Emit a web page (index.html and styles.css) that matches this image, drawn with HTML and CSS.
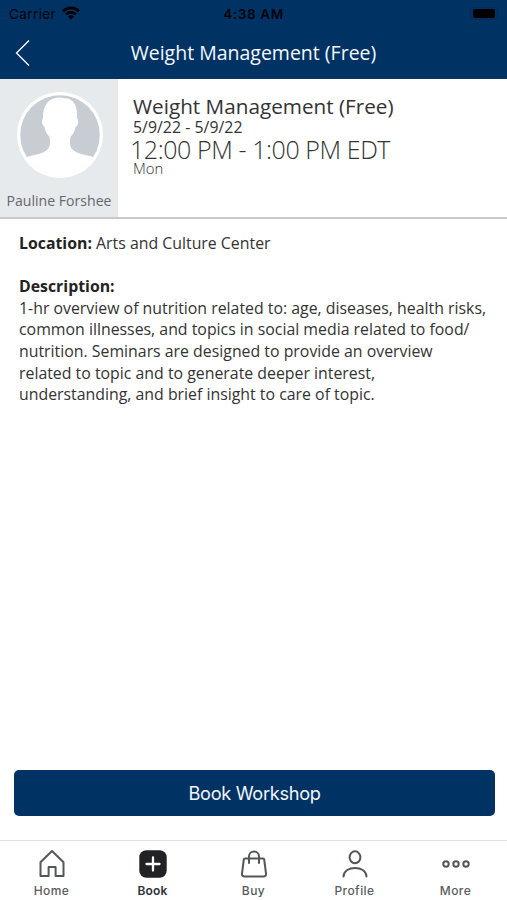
FILE: index.html
```html
<!DOCTYPE html>
<html lang="en">
<head>
<meta charset="utf-8">
<title>Weight Management (Free)</title>
<link rel="stylesheet" href="styles.css">
</head>
<body>
<header class="top">
  <div class="status">
    <span class="carrier">Carrier
      <svg width="18" height="14" viewBox="0 0 18 14" fill="none" stroke="#000" stroke-width="2.7"><path d="M1 5.2a11.5 11.5 0 0 1 16 0M4 8.4a7.2 7.2 0 0 1 10 0"/><path d="M9 13.6 6 10.8a4.3 4.3 0 0 1 6 0z" fill="#000" stroke="none"/></svg>
    </span>
    <span class="clock">4:38 AM</span>
    <span class="battery"><i></i></span>
  </div>
  <div class="nav">
    <svg class="back" width="16" height="28" viewBox="0 0 16 28" fill="none" stroke="#fff" stroke-width="1.3"><path d="M14 1.5 1.5 14 14 26.5"/></svg>
    <h1>Weight Management (Free)</h1>
  </div>
</header>
<section class="summary">
  <div class="staff">
    <svg width="86" height="86" viewBox="0 0 86 86">
      <circle cx="43" cy="43" r="43" fill="#fff"/>
      <circle cx="43" cy="43" r="39.800" fill="#c8cdd4"/>
      <path d="M9.500 65C17 62.500 26 62.500 31 57C33.500 53.500 33.500 49 32.500 45C29 41 28 38 27.500 35C25 33 24 28 26 26.500C25.500 13 32 5.500 43 5.500C46 5.500 48 7 51 6.500C58 9 60.500 15 60 26.500C62.500 28 61 34 58.500 35C58 39 56 42 53.500 45C52.500 49 52.500 54 55 57C60 62.500 69 62.500 76.500 65A40 40 0 0 1 9.500 65z" fill="#fff"/>
    </svg>
    <span class="name">Pauline Forshee</span>
  </div>
  <div class="facts">
    <div class="title">Weight Management (Free)</div>
    <div class="date">5/9/22 - 5/9/22</div>
    <div class="time">12:00 PM - 1:00 PM EDT</div>
    <div class="day">Mon</div>
  </div>
</section>
<main class="details">
  <p class="location"><b>Location:</b> Arts and Culture Center</p>
  <p><b>Description:</b></p>
  <p class="description">1-hr overview of nutrition related to: age, diseases, health risks,<br>common illnesses, and topics in social media related to food/<br>nutrition. Seminars are designed to provide an overview<br>related to topic and to generate deeper interest,<br>understanding, and brief insight to care of topic.</p>
</main>
<button class="book">Book Workshop</button>
<nav class="tabs">
  <a class="tab"><svg width="30" height="30" viewBox="0 0 30 30" fill="none" stroke="#54575a" stroke-width="2" stroke-linejoin="round"><path d="M3.500 13.200 15 2l11.500 11.200V27H18.600V18.100H11.600V27H3.500z"/></svg><span>Home</span></a>
  <a class="tab active"><svg width="30" height="30" viewBox="0 0 30 30"><rect x="1.300" y="1.300" width="27.400" height="27.400" rx="7" fill="#202226"/><path d="M15 8.500v13M8.500 15h13" stroke="#fff" stroke-width="2.300" stroke-linecap="round"/></svg><span>Book</span></a>
  <a class="tab"><svg width="30" height="30" viewBox="0 0 30 30" fill="none" stroke="#54575a" stroke-width="2" stroke-linejoin="round" stroke-linecap="round"><path d="M6 9.500H24Q25 9.500 25.200 10.500L27 24.500Q27.200 27.500 24.500 27.500H5.500Q2.800 27.500 3 24.500L4.800 10.500Q5 9.500 6 9.500zM10 14V7.500a5 5 0 0 1 10 0V14"/></svg><span>Buy</span></a>
  <a class="tab"><svg width="30" height="30" viewBox="0 0 30 30" fill="none" stroke="#54575a" stroke-width="2" stroke-linecap="round"><ellipse cx="15" cy="8.300" rx="5.400" ry="6"/><path d="M3.500 27.500C4 16 26 16 26.500 27.500"/></svg><span>Profile</span></a>
  <a class="tab"><svg width="30" height="30" viewBox="0 0 30 30" fill="none" stroke="#54575a" stroke-width="2"><circle cx="5" cy="15" r="2.700"/><circle cx="15" cy="15" r="2.700"/><circle cx="25" cy="15" r="2.700"/></svg><span>More</span></a>
</nav>
</body>
</html>
```
FILE: styles.css
```css
* { box-sizing: border-box; }
body { margin: 0; width: 507px; height: 900px; overflow: hidden; display: flex; flex-direction: column; background: #fff; color: #333; font-family: "Open Sans", sans-serif; white-space: nowrap; }
p, h1 { margin: 0; }
svg { display: block; flex: none; }
.top { flex: none; height: 79px; background: #003263; }
.status { height: 28px; padding: 0 9px; display: grid; grid-template-columns: 1fr auto 1fr; align-items: center; color: #00040a; font: 13.500px/28px Inter, sans-serif; }
.carrier { display: flex; gap: 6px; align-items: center; letter-spacing: .4px; }
.carrier svg { margin-top: -2px; }
.clock { font-weight: 600; letter-spacing: .6px; }
.battery { justify-self: end; width: 28px; height: 13px; margin-top: -2px; padding: 1px 2px; border: 1px solid #002b56; border-radius: 4px; }
.battery i { display: block; height: 9px; background: #000; border-radius: 2px; }
.nav { height: 50px; display: grid; grid-template-columns: 40px 1fr 40px; align-items: center; }
.back { margin-left: 15px; }
.nav h1 { color: #f4f8ff; font-size: 19.500px; font-weight: 400; line-height: 28px; text-align: center; }
.summary { flex: none; height: 140px; display: flex; border-bottom: 2px solid #c6c9d0; }
.staff { width: 118px; background: #e7eaed; display: flex; flex-direction: column; align-items: center; padding: 13px 0 0; }
.staff svg { margin-left: 2px; }
.name { margin-top: 13px; font-size: 14.100px; line-height: 20px; color: #65686c; }
.facts { padding: 14px 0 0 13px; margin-left: 2px; }
.title { font-size: 20.700px; line-height: 27px; }
.date { font-size: 15.800px; line-height: 15px; letter-spacing: .05px; }
.time { margin-left: -3px; font-size: 25px; line-height: 29px; font-weight: 300; letter-spacing: -.42px; }
.day { font-size: 14.800px; line-height: 8px; font-weight: 300; }
.details { flex: 1; padding: 14px 19px 0; font-size: 15.870px; line-height: 21.600px; }
.details b { color: #222; font-size: 15.850px; }
.location { margin-bottom: 21.600px; }
.book { flex: none; height: 46px; margin: 0 12px 24px 14px; padding: 0; border: 0; border-radius: 5px; background: #003263; color: #f2f6ff; font: 18.200px/46px Inter, sans-serif; letter-spacing: -.32px; }
.tabs { flex: none; height: 60px; padding: 0 1px; border-top: 1px solid #dedfe1; display: grid; grid-template-columns: repeat(5, 1fr); color: #595c60; font: 500 12px/16px Inter, sans-serif; }
.tab { display: flex; flex-direction: column; align-items: center; padding-top: 8px; gap: 4px; letter-spacing: .45px; }
.active { color: #303236; font-weight: 600; letter-spacing: .2px; }
```
